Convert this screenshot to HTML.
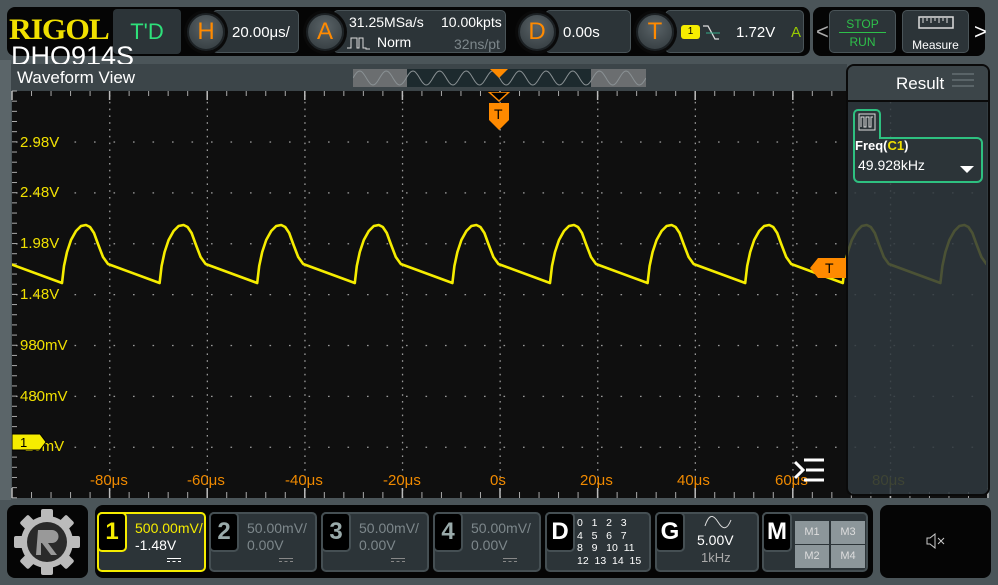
<!DOCTYPE html>
<html><head><meta charset="utf-8"><style>
*{margin:0;padding:0;box-sizing:border-box}
body{width:998px;height:585px;background:#4b5559;font-family:"Liberation Sans",sans-serif;position:relative;overflow:hidden;color:#fff}
.a{position:absolute}
.circ{position:absolute;width:38px;height:38px;border-radius:50%;background:radial-gradient(circle at 50% 35%,#5a6367,#30383c);border:2px solid #1c2124;color:#ff8a00;font-size:24px;text-align:center;line-height:34px;box-shadow:0 0 0 3px #0a0a0a}
.box{position:absolute;background:#2c3438;border:1px solid #4a5458;border-radius:5px}
.ch{position:absolute;top:512px;height:60px;background:#2c3438;border:2px solid #454f53;border-radius:5px}
.chn{position:absolute;left:-2px;top:-2px;width:30px;height:40px;background:#000;border:2px solid #454f53;border-radius:5px;font-size:24px;font-weight:bold;color:#9aa;text-align:center;line-height:36px}
.cht{position:absolute;left:36px;top:6px;font-size:14px;color:#7d878b;line-height:17px}
.cpl{position:absolute;left:68px;top:44px;width:14px;border-top:1px solid #888;border-bottom:1px dashed #888;height:4px}
.ylab{position:absolute;left:20px;color:#f0e000;font-size:15px}
.xlab{position:absolute;top:472px;color:#f08a00;font-size:15px}
</style></head><body>
<div class="a" style="left:0;top:60px;width:11px;height:440px;background:#5b6569"></div>
<div class="a" style="left:7px;top:7px;width:803px;height:49px;background:#050505;border-radius:8px"></div>
<div class="a" style="left:9px;top:13px;font-family:'Liberation Serif',serif;font-weight:bold;font-size:30px;color:#f0e000;letter-spacing:-1px;transform:scaleX(1.05);transform-origin:left">RIGOL</div>
<div class="a" style="left:113px;top:9px;width:68px;height:45px;background:#2c3438;border-radius:4px;color:#2ee07a;font-size:22px;text-align:center;line-height:45px">T'D</div>
<div class="box" style="left:212px;top:10px;width:87px;height:43px"></div>
<div class="circ" style="left:187px;top:13px">H</div>
<div class="a" style="left:232px;top:24px;font-size:15px">20.00μs/</div>
<div class="box" style="left:333px;top:10px;width:173px;height:43px"></div>
<div class="circ" style="left:306px;top:13px">A</div>
<div class="a" style="left:349px;top:14px;font-size:14px">31.25MSa/s</div>
<div class="a" style="left:441px;top:14px;font-size:14px">10.00kpts</div>
<svg class="a" style="left:346px;top:36px" width="26" height="14"><path d="M1 12h4V2h6v10h2V2h4v10h3v1h4" stroke="#ddd" fill="none" stroke-width="1"/></svg>
<div class="a" style="left:377px;top:34px;font-size:14px">Norm</div>
<div class="a" style="left:454px;top:36px;font-size:14px;color:#7d878b">32ns/pt</div>
<div class="box" style="left:545px;top:10px;width:86px;height:43px"></div>
<div class="circ" style="left:518px;top:13px">D</div>
<div class="a" style="left:563px;top:24px;font-size:15px">0.00s</div>
<div class="box" style="left:665px;top:10px;width:139px;height:43px"></div>
<div class="circ" style="left:636px;top:13px">T</div>
<div class="a" style="left:681px;top:25px;width:19px;height:14px;background:#f5ec00;border-radius:3px;color:#000;font-size:10px;text-align:center;line-height:14px">1</div>
<svg class="a" style="left:702px;top:23px" width="18" height="18"><path d="M1 3h5l7 13h4" stroke="#ddd" fill="none" stroke-width="1.3"/><path d="M4 10h14" stroke="#3a8" stroke-width="1"/></svg>
<div class="a" style="left:736px;top:24px;font-size:15px">1.72V</div>
<div class="a" style="left:791px;top:24px;font-size:15px;color:#9c0">A</div>
<div class="a" style="left:813px;top:7px;width:172px;height:49px;background:#050505;border-radius:8px"></div>
<div class="a" style="left:816px;top:19px;font-size:22px;color:#aaa">&lt;</div>
<div class="a" style="left:974px;top:19px;font-size:22px;color:#fff">&gt;</div>
<div class="box" style="left:829px;top:10px;width:67px;height:43px;background:#2c3438"></div>
<div class="a" style="left:829px;top:17px;width:67px;text-align:center;color:#2ec04a;font-size:12px">STOP</div>
<div class="a" style="left:839px;top:32px;width:47px;border-top:1px solid #2ec04a"></div>
<div class="a" style="left:829px;top:35px;width:67px;text-align:center;color:#2ec04a;font-size:12px">RUN</div>
<div class="box" style="left:902px;top:10px;width:67px;height:43px"></div>
<svg class="a" style="left:918px;top:15px" width="36" height="17"><rect x="1" y="2" width="34" height="11" fill="none" stroke="#ddd" stroke-width="1.5"/><path d="M5 3v5M9 3v3M13 3v5M17 3v3M21 3v5M25 3v3M29 3v5" stroke="#ddd"/></svg>
<div class="a" style="left:902px;top:38px;width:67px;text-align:center;font-size:12px">Measure</div>
<div class="a" style="left:11px;top:43px;font-size:27px;color:#fff;line-height:27px">DHO914S</div>
<div class="a" style="left:11px;top:64px;width:836px;height:27px;background:#3c4549"></div>
<div class="a" style="left:17px;top:68px;font-size:17px">Waveform View</div>
<div class="a" style="left:353px;top:69px;width:293px;height:18px;background:#1d2a2e"></div>
<div class="a" style="left:353px;top:69px;width:54px;height:18px;background:#6b6e70"></div>
<div class="a" style="left:591px;top:69px;width:55px;height:18px;background:#6b6e70"></div>
<svg class="a" style="left:353px;top:69px" width="293" height="18"><path id="sw" fill="none" stroke="#8a9194" stroke-width="1"/></svg>
<svg class="a" style="left:490px;top:69px" width="18" height="10"><path d="M0 0h18L9 9z" fill="#ff8a00"/></svg>
<div class="a" style="left:12px;top:91px;width:975px;height:407px;background:#0f0f0f"></div>
<svg class="a" style="left:0;top:0" width="998" height="585" id="plot"></svg>
<div class="ylab" style="top:134px">2.98V</div>
<div class="ylab" style="top:184px">2.48V</div>
<div class="ylab" style="top:235px">1.98V</div>
<div class="ylab" style="top:286px">1.48V</div>
<div class="ylab" style="top:337px">980mV</div>
<div class="ylab" style="top:388px">480mV</div>
<div class="ylab" style="top:438px">-20mV</div>
<div class="xlab" style="left:90px">-80μs</div>
<div class="xlab" style="left:187px">-60μs</div>
<div class="xlab" style="left:285px">-40μs</div>
<div class="xlab" style="left:383px">-20μs</div>
<div class="xlab" style="left:490px">0s</div>
<div class="xlab" style="left:580px">20μs</div>
<div class="xlab" style="left:677px">40μs</div>
<div class="xlab" style="left:775px">60μs</div>
<svg class="a" style="left:12px;top:433px" width="34" height="20"><path d="M0 1h28l6 8-6 8H0z" fill="#f5ec00" stroke="#000"/><text x="8" y="14" font-size="13" font-family="Liberation Sans" fill="#000">1</text></svg>
<svg class="a" style="left:487px;top:92px" width="24" height="40"><path d="M2 0h20l-10 9z" fill="#000" stroke="#ff8a00" stroke-width="1.5"/><path d="M2 11h20v17l-10 10-10-10z" fill="#ff8a00"/><text x="7" y="27" font-size="14" font-family="Liberation Sans" fill="#000">T</text></svg>
<svg class="a" style="left:794px;top:458px" width="36" height="26"><path d="M1 4l8 8-8 8" stroke="#fff" stroke-width="3" fill="none"/><path d="M10 2h20M12 12h18M10 22h20" stroke="#fff" stroke-width="3"/></svg>
<div class="a" style="left:846px;top:64px;width:144px;height:432px;background:rgba(46,56,62,0.86);border:2px solid #0a0a0a;border-radius:8px"></div>
<div class="a" style="left:872px;top:472px;color:#3e4434;font-size:15px">80μs</div>
<svg class="a" style="left:810px;top:258px" width="36" height="20"><path d="M8 0h28v20H8L0 10z" fill="#ff8a00"/><text x="15" y="15" font-size="14" font-family="Liberation Sans" fill="#000">T</text></svg>
<div class="a" style="left:848px;top:66px;width:140px;height:36px;background:#3c4549;border-radius:6px 6px 0 0;border-bottom:2px solid #0a0a0a"></div>
<div class="a" style="left:896px;top:74px;font-size:17px">Result</div>
<svg class="a" style="left:952px;top:72px" width="22" height="18"><path d="M0 2h22M0 8h22M0 14h22" stroke="#5a6468" stroke-width="2"/></svg>
<div class="a" style="left:853px;top:109px;width:28px;height:30px;border:2px solid #2ec080;border-bottom:none;border-radius:5px 5px 0 0;background:#2c3438"></div>
<svg class="a" style="left:858px;top:113px" width="18" height="18"><rect x="1" y="1" width="16" height="16" fill="none" stroke="#ddd"/><path d="M3 14V4h3v10h2V4h3v10h2V4h2" stroke="#ddd" fill="none"/></svg>
<div class="a" style="left:853px;top:137px;width:130px;height:46px;border:2px solid #2ec080;border-radius:0 6px 6px 6px;background:#2c3438"></div>
<div class="a" style="left:855px;top:135px;width:24px;height:4px;background:#2c3438"></div>
<div class="a" style="left:855px;top:138px;font-size:13px;font-weight:bold">Freq(<span style="color:#f0e000">C1</span>)</div>
<div class="a" style="left:858px;top:157px;font-size:14px">49.928kHz</div>
<svg class="a" style="left:960px;top:166px" width="14" height="8"><path d="M0 0h14L7 7z" fill="#fff"/></svg>
<div class="a" style="left:7px;top:505px;width:81px;height:73px;background:#050505;border-radius:8px"></div>
<svg class="a" style="left:12px;top:507px" width="70" height="70" viewBox="0 0 70 70">
<g transform="translate(35 35)" fill="#bbb"><circle r="26"/><g id="t"><rect x="-6" y="-33" width="12" height="10" rx="2"/></g><use href="#t" transform="rotate(45)"/><use href="#t" transform="rotate(90)"/><use href="#t" transform="rotate(135)"/><use href="#t" transform="rotate(180)"/><use href="#t" transform="rotate(225)"/><use href="#t" transform="rotate(270)"/><use href="#t" transform="rotate(315)"/><circle r="20" fill="#2a2a2a"/><path d="M-9-12h14a6 6 0 0 1 0 13h-4l9 12h-6l-9-12h-1v12h-5z" fill="#999"/></g></svg>
<div class="a" style="left:95px;top:505px;width:778px;height:73px;background:#050505;border-radius:8px"></div>
<div class="ch" style="left:97px;width:109px;border-color:#f5ec00"><div class="chn" style="border-color:#f5ec00;color:#f5ec00">1</div><div class="cht" style="color:#f5ec00">500.00mV/<br><span style="color:#fff">-1.48V</span></div><div class="cpl" style="border-color:#fff"></div></div>
<div class="ch" style="left:209px;width:108px"><div class="chn">2</div><div class="cht">50.00mV/<br>0.00V</div><div class="cpl"></div></div>
<div class="ch" style="left:321px;width:108px"><div class="chn">3</div><div class="cht">50.00mV/<br>0.00V</div><div class="cpl"></div></div>
<div class="ch" style="left:433px;width:108px"><div class="chn">4</div><div class="cht">50.00mV/<br>0.00V</div><div class="cpl"></div></div>
<div class="ch" style="left:545px;width:106px"><div class="chn" style="color:#fff">D</div>
<div class="a" style="left:30px;top:3px;font-size:10.5px;line-height:12.5px;white-space:pre;font-family:'Liberation Sans'">0   1   2   3
4   5   6   7
8   9   10  11
12  13  14  15</div></div>
<div class="ch" style="left:655px;width:104px"><div class="chn" style="color:#fff">G</div>
<svg class="a" style="left:46px;top:2px" width="30" height="14"><path d="M2 10C6-2 10-2 15 6s9 8 13-2" stroke="#ddd" fill="none"/></svg>
<div class="a" style="left:40px;top:18px;font-size:14px">5.00V</div><div class="a" style="left:44px;top:36px;font-size:13px;color:#aaa">1kHz</div></div>
<div class="ch" style="left:762px;width:106px"><div class="chn" style="color:#fff">M</div>
<div class="a" style="left:31px;top:7px;width:70px;height:47px;background:#2c3438">
<div class="a" style="left:0;top:0;width:34px;height:23px;background:#8c969a;color:#ddd;font-size:11px;text-align:center;line-height:23px">M1</div>
<div class="a" style="left:36px;top:0;width:34px;height:23px;background:#8c969a;color:#ddd;font-size:11px;text-align:center;line-height:23px">M3</div>
<div class="a" style="left:0;top:24px;width:34px;height:23px;background:#8c969a;color:#ddd;font-size:11px;text-align:center;line-height:23px">M2</div>
<div class="a" style="left:36px;top:24px;width:34px;height:23px;background:#8c969a;color:#ddd;font-size:11px;text-align:center;line-height:23px">M4</div></div></div>
<div class="a" style="left:880px;top:505px;width:111px;height:73px;background:#050505;border-radius:8px"></div>
<svg class="a" style="left:926px;top:533px" width="20" height="16"><path d="M1 5h3l5-4v14l-5-4H1z" fill="none" stroke="#ccc"/><path d="M12 5l6 6M18 5l-6 6" stroke="#ccc"/></svg>
<script>
(function(){
var s=document.getElementById('plot'),h='';
var L=12,R=986,T=91,B=498,dx=97.6,dy=50.875;
for(var i=1;i<10;i++){var x=L+i*dx;for(var y=T+4;y<B;y+=6.8)h+='<rect x="'+(x-0.5)+'" y="'+y+'" width="1.3" height="1.6" fill="#999"/>';}
for(var j=1;j<8;j++){var y=T+j*dy;for(var x=L+4;x<R;x+=19.5)h+='<rect x="'+x+'" y="'+(y-0.5)+'" width="1.6" height="1.3" fill="#999"/>';}
for(var x=L;x<R;x+=19.52){h+='<path d="M'+x+' '+T+'v5M'+x+' '+B+'v-6" stroke="#aaa"/>';}
for(var y=T;y<B;y+=10.17){h+='<path d="M'+L+' '+y+'h5" stroke="#aaa"/>';}
for(var i=0;i<=10;i++){var x=L+i*dx;h+='<path d="M'+x+' '+T+'v9M'+x+' '+B+'v-10" stroke="#bbb" stroke-width="1.5"/>';}
var seg=[[0,283],[2,266],[5,252],[9,240],[14,231],[19,226],[24,225],[28,227],[32,233],[36,244],[41,257],[46,264],[97.6,283]];
var out=[];for(var k=-2;k<12;k++){var b=62+k*dx;seg.forEach(function(p){out.push([b+p[0],p[1]]);});}
var d='';out.forEach(function(q,i){d+=(i?'L':'M')+q[0].toFixed(1)+' '+q[1];});
h='<clipPath id="ca"><rect x="'+L+'" y="'+T+'" width="'+(R-L)+'" height="407"/></clipPath>'+h+'<path d="'+d+'" stroke="#f5ec00" stroke-width="2.6" fill="none" clip-path="url(#ca)" stroke-linejoin="round"/>';
s.innerHTML=h;
var w='';for(var x=0;x<=293;x++){var y=9-7*Math.sin(x/293*2*Math.PI*11);w+=(x?'L':'M')+x+' '+y.toFixed(1);}
document.getElementById('sw').setAttribute('d',w);
})();
</script>
</body></html>
